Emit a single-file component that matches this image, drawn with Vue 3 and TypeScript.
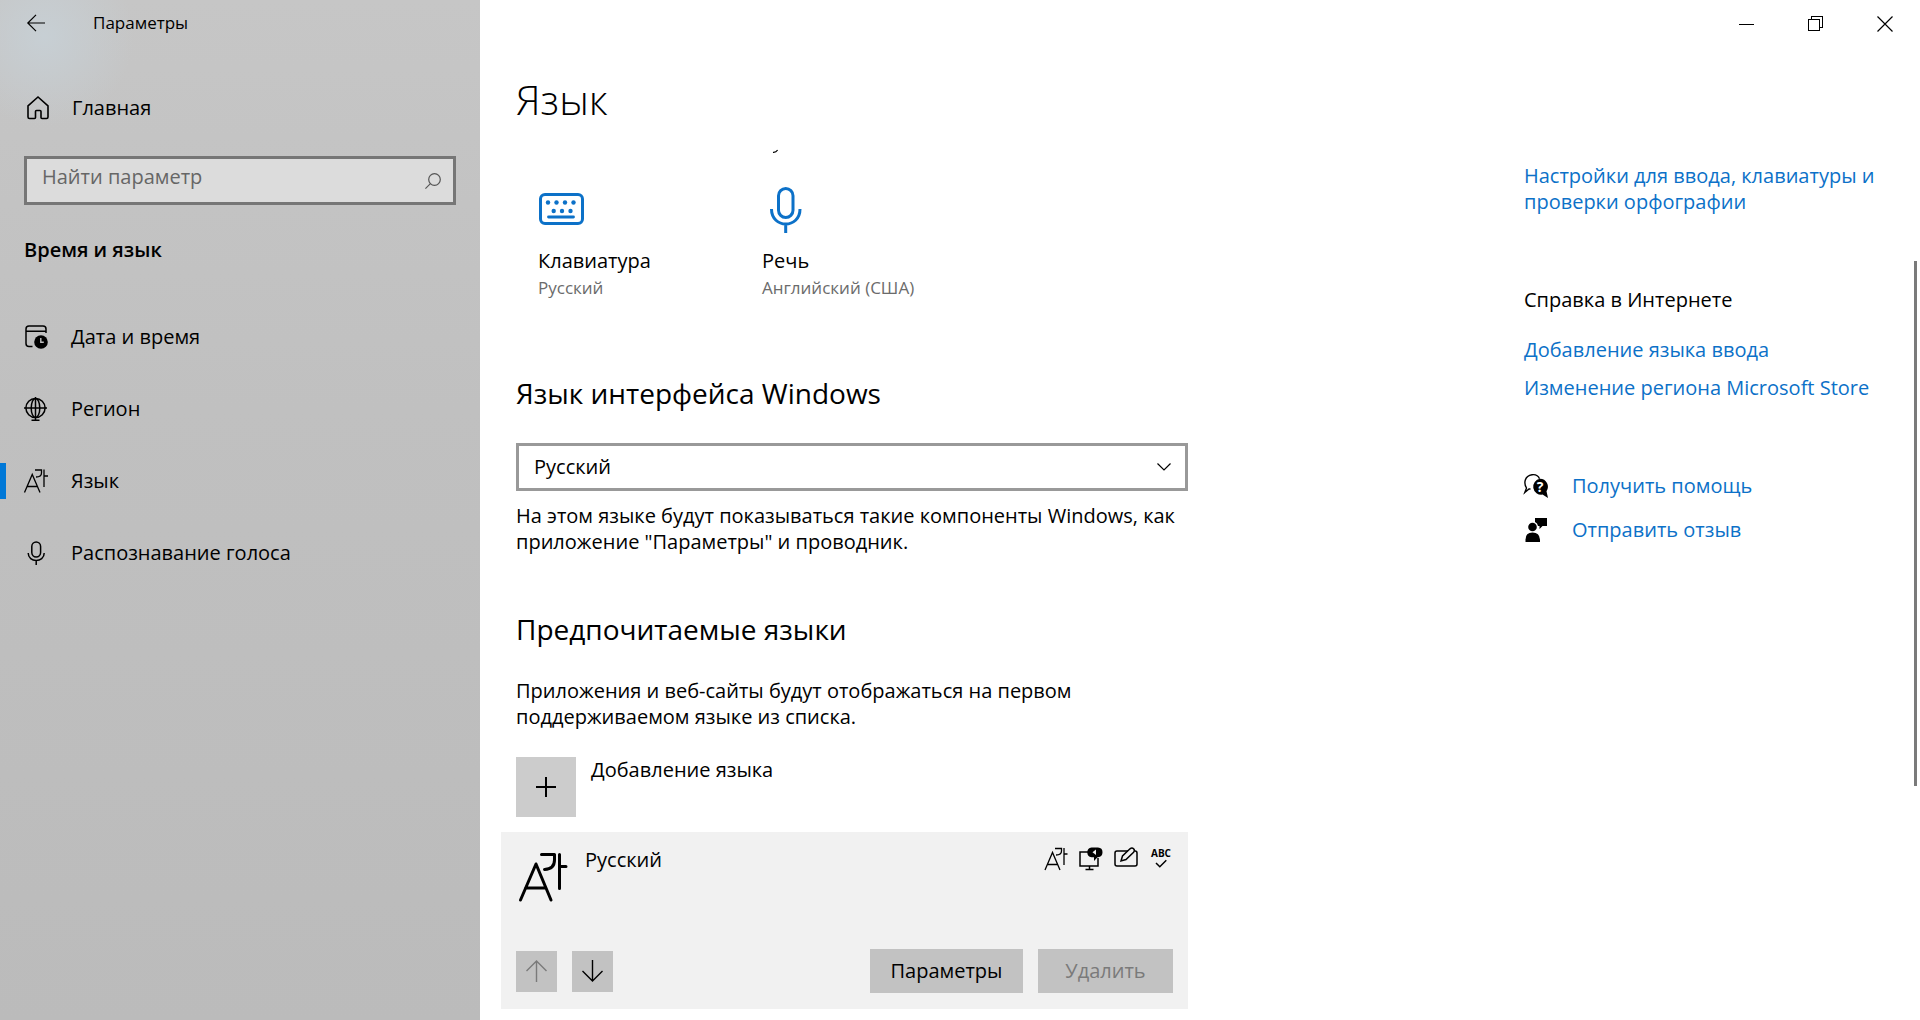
<script setup lang="ts">
import { ref } from 'vue'

type NavIcon = 'date' | 'region' | 'language' | 'mic'

interface NavItem {
  id: NavIcon
  label: string
}

const navItems: NavItem[] = [
  { id: 'date', label: 'Дата и время' },
  { id: 'region', label: 'Регион' },
  { id: 'language', label: 'Язык' },
  { id: 'mic', label: 'Распознавание голоса' },
]

const active = ref<NavIcon>('language')
const query = ref('')
const displayLanguage = ref('Русский')
</script>

<template>
  <div class="window">
    <aside class="sidebar">
      <header class="titlebar">
        <button class="back" type="button" aria-label="Назад">
          <svg width="18" height="18" viewBox="0 0 18 18" class="line">
            <path d="M18 9H1M9 .8.8 9 9 17.2" />
          </svg>
        </button>
        <span class="app-name">Параметры</span>
      </header>

      <a class="home" href="#">
        <svg class="icon line" viewBox="0 0 24 24">
          <path d="M2 9.8 12 1l10 8.800V21q0 1.500-1.500 1.500H16q-1 0-1-1V15.500q0-1-1-1h-3.500q-1 0-1 1v6q0 1-1 1H3.500Q2 22.500 2 21Z" stroke-width="1.600" />
        </svg>
        <span>Главная</span>
      </a>

      <form class="search" @submit.prevent>
        <input v-model="query" type="text" placeholder="Найти параметр" aria-label="Найти параметр" />
        <button type="submit" aria-label="Поиск">
          <svg width="16" height="16" viewBox="0 0 16 16" class="line">
            <circle cx="9.500" cy="6.500" r="5.800" />
            <path d="M5.400 10.600.4 15.600" />
          </svg>
        </button>
      </form>

      <h2 class="section">Время и язык</h2>

      <nav class="nav">
        <a
          v-for="item in navItems"
          :key="item.id"
          href="#"
          :class="{ active: item.id === active }"
          @click.prevent="active = item.id"
        >
          <svg v-if="item.id === 'date'" class="icon line" viewBox="0 0 24 24">
            <path d="M8.500 21.500H5q-3 0-3-3V4q0-3 3-3h14q3 0 3 3v4M2 6.200h20" stroke-width="1.500" />
            <circle cx="17" cy="17" r="6.800" fill="currentColor" stroke="none" />
            <path d="M16.800 13v4.300h3" stroke="#c0c0c0" stroke-width="1.400" />
          </svg>
          <svg v-else-if="item.id === 'region'" class="icon line" viewBox="0 0 24 24">
            <g stroke-width="1.500">
              <circle cx="11.500" cy="11" r="9.600" />
              <ellipse cx="11.500" cy="11" rx="4.300" ry="9.600" />
              <path d="M0 11h23M11.500 0v23M7.500 23.200h8" />
            </g>
          </svg>
          <svg v-else-if="item.id === 'language'" class="icon line" viewBox="0 0 48 48">
            <g stroke-width="2.600">
              <path d="M1 47 16.500 11 32 47M6 35h21M22 2h13v6q0 8-11 8M40 1v35M40 14h8" />
            </g>
          </svg>
          <svg v-else class="icon line" viewBox="0 0 24 24">
            <g stroke-width="1.500">
              <rect x="7.800" y="1" width="8.800" height="15" rx="4.400" />
              <path d="M4.200 12c0 10 16 10 16 0M12.200 19.500V24" />
            </g>
          </svg>
          <span>{{ item.label }}</span>
        </a>
      </nav>
    </aside>

    <div class="main">
      <div class="caption">
        <button type="button" aria-label="Свернуть">
          <svg width="16" height="16" viewBox="0 0 16 16" class="line crisp"><path d="M0 8.500h15" /></svg>
        </button>
        <button type="button" aria-label="Восстановить">
          <svg width="16" height="16" viewBox="0 0 16 16" class="line crisp">
            <path d="M.5 3.500h11v11H.5zM3.500 3.500v-3h11v11h-3" />
          </svg>
        </button>
        <button type="button" aria-label="Закрыть">
          <svg width="16" height="16" viewBox="0 0 16 16" class="line"><path d="M.5.5l15 15M15.500.5l-15 15" /></svg>
        </button>
      </div>

      <h1>Язык</h1>

      <div class="columns">
        <main class="content">
          <div class="scroll-edge">
            <svg width="5" height="3" viewBox="0 0 5 3" class="line"><path d="M0 2.300Q3 2.600 4.600 0" /></svg>
          </div>
          <div class="tiles">
            <a class="tile" href="#">
              <svg width="48" height="48" viewBox="0 0 48 48" class="line">
                <rect x="2.500" y="9.500" width="42" height="29" rx="4.500" stroke-width="3" />
                <path d="M10.500 32h25" stroke-width="2.800" stroke-linecap="round" />
                <g fill="currentColor" stroke="none">
                  <circle cx="10" cy="17.500" r="2.200" /><circle cx="18.500" cy="17.500" r="2.200" />
                  <circle cx="27" cy="17.500" r="2.200" /><circle cx="35.500" cy="17.500" r="2.200" />
                  <circle cx="15.700" cy="26" r="2.200" /><circle cx="24" cy="26" r="2.200" />
                  <circle cx="32.500" cy="26" r="2.200" />
                </g>
              </svg>
              <strong>Клавиатура</strong>
              <small>Русский</small>
            </a>
            <a class="tile" href="#">
              <svg width="48" height="48" viewBox="0 0 48 48" class="line">
                <g stroke-width="3">
                  <rect x="16.500" y="3.500" width="14.500" height="29" rx="7.250" />
                  <path d="M9.500 24c0 20 28.500 20 28.500 0M23.700 39v9" />
                </g>
              </svg>
              <strong>Речь</strong>
              <small>Английский (США)</small>
            </a>
          </div>

          <section class="block">
            <h2><label for="display-language">Язык интерфейса Windows</label></h2>
            <div class="select">
              <select id="display-language" v-model="displayLanguage">
                <option>Русский</option>
              </select>
              <svg width="14" height="8" viewBox="0 0 14 8" class="line"><path d="M.5.5 7 7 13.500.5" /></svg>
            </div>
            <p>На этом языке будут показываться такие компоненты Windows, как приложение "Параметры" и проводник.</p>
          </section>

          <section class="block preferred">
            <h2>Предпочитаемые языки</h2>
            <p>Приложения и веб-сайты будут отображаться на первом поддерживаемом языке из списка.</p>
            <button class="add" type="button">
              <span class="plus">
                <svg width="20" height="20" viewBox="0 0 20 20" class="line crisp"><path d="M0 10h20M10 0v20" /></svg>
              </span>
              <span>Добавление языка</span>
            </button>
          </section>

          <article class="card">
            <div class="card-top">
              <svg width="48" height="48" viewBox="0 0 48 48" class="line">
                <path d="M1.500 47 17 11 32 47M6.500 35h20.500M22.500 1.500h13V7q0 9-10 9.500M40.500 1.500v34M40.500 13.500H47" stroke-width="3" stroke-linecap="round" stroke-linejoin="round" />
              </svg>
              <span class="lang-name">Русский</span>
              <div class="features">
                <svg class="icon line" viewBox="0 0 48 48">
                  <path d="M2 46 17 11 32 46M6 35h21M22 3h13v5q0 8-11 8M40 2v34M40 14h7" stroke-width="2.600" />
                </svg>
                <svg class="icon line" viewBox="0 0 24 24">
                  <path d="M9 5H1v14h18v-8M10.500 19v4M6.500 22.500h8" stroke-width="1.500" />
                  <path d="M12.500.5h6.500Q23.500.8 23.500 5.200T19 10.200h-.5L15 14v-3.800h-2.500Q8.300 9.500 8.300 5.400T12.500.5Z" fill="currentColor" stroke="none" />
                  <path d="m13.500 5.200 3.500-2.800v5.600Z" fill="#f1f1f1" stroke="none" />
                </svg>
                <svg class="icon line" viewBox="0 0 24 24">
                  <g stroke-width="1.500">
                    <path d="M14 4H3Q1 4 1 6v11q0 2 2 2h18q2 0 2-2V6q0-2-2-2" />
                    <path d="m7 14 1.500-5L16 1.800q2-1.600 3.600 0t0 3.400L12 12.500Z" />
                  </g>
                </svg>
                <svg class="icon line" viewBox="0 0 24 24">
                  <text x="12" y="9.500" class="abc">ABC</text>
                  <path d="m7 16 3.800 3.800 6.500-6.500" stroke-width="1.500" />
                </svg>
              </div>
            </div>
            <div class="card-actions">
              <button class="move" type="button" disabled aria-label="Вверх">
                <svg width="22" height="22" viewBox="0 0 22 22" class="line"><path d="M10.500 22V1M.5 11l10-10 10 10" stroke-width="1.400" /></svg>
              </button>
              <button class="move" type="button" aria-label="Вниз">
                <svg width="22" height="22" viewBox="0 0 22 22" class="line"><path d="M10.500 0v21M.5 11l10 10 10-10" stroke-width="1.400" /></svg>
              </button>
              <span class="spacer"></span>
              <button class="options" type="button">Параметры</button>
              <button class="remove" type="button" disabled>Удалить</button>
            </div>
          </article>
        </main>

        <aside class="help">
          <a href="#">Настройки для ввода, клавиатуры и проверки орфографии</a>
          <h3>Справка в Интернете</h3>
          <ul class="links">
            <li><a href="#">Добавление языка ввода</a></li>
            <li><a href="#">Изменение региона Microsoft Store</a></li>
          </ul>
          <ul class="support">
            <li>
              <svg class="icon" viewBox="0 0 24 24">
                <path d="M6.500 15H5L.8 18.500 2.500 14C-.5 9 .5 2 8 .7c4-.5 6.500 1.500 7.500 4" fill="none" stroke="currentColor" stroke-width="1.400" />
                <path d="M16 4.700a8 8 0 0 1 6.500 12.500L24 24l-5.500-3.400A8 8 0 1 1 16 4.700Z" fill="currentColor" />
                <text x="16" y="17.500" class="question">?</text>
              </svg>
              <a href="#">Получить помощь</a>
            </li>
            <li>
              <svg class="icon" viewBox="0 0 24 24" fill="currentColor">
                <path d="M11 0h12v8h-4.500L15.500 11V8H14q-.5-3-3-4Z" />
                <circle cx="8.500" cy="9" r="4.300" />
                <path d="M1.500 24v-2.500q0-7 7-7t7.500 7V24Z" />
              </svg>
              <a href="#">Отправить отзыв</a>
            </li>
          </ul>
        </aside>
      </div>
      <div class="scrollbar"></div>
    </div>
  </div>
</template>

<style>
body {
  margin: 0;
  background: #fff;
}
</style>

<style scoped>
.window {
  display: grid;
  grid-template-columns: 25% 1fr;
  min-height: 100vh;
  font: 20px/26px "Open Sans", "Noto Sans", sans-serif;
  color: #000;
}
h1, h2, h3, p, ul {
  margin: 0;
  padding: 0;
  font-weight: 400;
}
ul {
  list-style: none;
}
a {
  color: inherit;
  text-decoration: none;
}
button, input, select {
  font: inherit;
  color: inherit;
  margin: 0;
  padding: 0;
  border: 0;
  border-radius: 0;
  background: none;
}
svg {
  display: block;
  flex: none;
  overflow: visible;
}
.line {
  fill: none;
  stroke: currentColor;
  stroke-width: 1.2;
}
.crisp {
  shape-rendering: crispEdges;
}
.icon {
  width: 24px;
  height: 24px;
}

.sidebar {
  background:
    radial-gradient(circle at 44px 36px, #c7cfd4 0, #c7cfd400 90px),
    linear-gradient(#c6c6c6, #c0c0c0 40%, #bbb);
}
.titlebar {
  display: flex;
  align-items: center;
  height: 46px;
  padding-left: 27px;
}
.app-name {
  margin-left: 48px;
  font-size: 17px;
}
.home {
  display: flex;
  align-items: center;
  gap: 22px;
  margin-top: 37px;
  padding-left: 26px;
  height: 50px;
}
.search {
  display: flex;
  align-items: center;
  height: 43px;
  margin: 23px 24px 0;
  border: 3px solid #767676;
  background: #dcdcdc;
}
.search input {
  flex: 1;
  min-width: 0;
  height: 35px;
  padding: 0 0 8px 15px;
  outline: 0;
}
.search input::placeholder {
  color: #666;
  opacity: 1;
}
.search button {
  margin-right: 12px;
  color: #555;
}
.section {
  margin: 32px 0 0 24px;
  font-size: 20px;
  font-weight: 600;
}
.nav {
  margin-top: 56px;
}
.nav a {
  display: flex;
  align-items: center;
  gap: 23px;
  height: 36px;
  margin-bottom: 36px;
  padding-left: 18px;
  border-left: 6px solid transparent;
}
.nav a.active {
  border-left-color: #0078d7;
}

.main {
  position: relative;
  min-width: 0;
  padding-left: 36px;
}
.caption {
  display: flex;
  justify-content: flex-end;
  height: 48px;
  padding-right: 1px;
}
.caption button {
  display: grid;
  place-items: center;
  width: 69px;
}
h1 {
  margin-top: 24px;
  font-size: 41px;
  line-height: 54px;
  font-weight: 300;
}
.columns {
  display: flex;
  justify-content: space-between;
  margin-top: 24px;
}
.content {
  width: 672px;
}
.scroll-edge {
  height: 3px;
  padding-left: 257px;
}
.tiles {
  display: flex;
  padding: 32px 0 0 22px;
}
.tile {
  display: flex;
  flex-direction: column;
  width: 224px;
}
.tile svg {
  color: #0c71c8;
}
.tile strong {
  margin-top: 15px;
  font-weight: 400;
}
.tile small {
  font-size: 17px;
  line-height: 28px;
  color: #6b6b6b;
}
.block {
  margin-top: 71px;
}
.block h2 {
  font-size: 28px;
  line-height: 40px;
}
.select {
  position: relative;
  margin: 30px 0 12px;
}
.select select {
  display: block;
  width: 100%;
  height: 48px;
  padding: 0 48px 0 15px;
  border: 3px solid #999;
  appearance: none;
  background: #fff;
}
.select svg {
  position: absolute;
  right: 17px;
  top: 20px;
  pointer-events: none;
}
.preferred {
  margin-top: 54px;
}
.preferred p {
  margin-top: 29px;
}
.add {
  display: flex;
  gap: 15px;
  margin-top: 27px;
}
.plus {
  display: grid;
  place-items: center;
  width: 60px;
  height: 60px;
  background: #ccc;
}
.card {
  margin: 15px 0 12px -15px;
  padding: 15px 15px 16px;
  background: #f1f1f1;
}
.card-top {
  display: flex;
}
.card-top > svg {
  margin: 6px 0 0 3px;
}
.lang-name {
  flex: 1;
  margin-left: 18px;
}
.features {
  display: flex;
  gap: 11px;
}
.abc {
  fill: currentColor;
  stroke: none;
  font-size: 10px;
  font-weight: 700;
  text-anchor: middle;
}
.question {
  fill: #fff;
  font-size: 14px;
  font-weight: 700;
  text-anchor: middle;
}
.card-actions {
  display: flex;
  align-items: center;
  gap: 15px;
  margin-top: 48px;
}
.card-actions button {
  display: grid;
  place-items: center;
  height: 44px;
  background: #c2c2c2;
}
.card-actions .move {
  width: 41px;
  height: 41px;
}
.card-actions button:disabled {
  color: #7a7a7a;
}
.spacer {
  flex: 1;
}
.options {
  width: 153px;
}
.remove {
  width: 135px;
}
.help {
  width: 360px;
  margin: 13px 36px 0 0;
}
.help a {
  color: #0c71c8;
}
.help h3 {
  margin-top: 72px;
  font-size: 20px;
}
.links {
  display: grid;
  gap: 12px;
  margin-top: 24px;
}
.support {
  display: grid;
  gap: 18px;
  margin-top: 72px;
}
.support li {
  display: flex;
  align-items: center;
  gap: 24px;
}
.scrollbar {
  position: absolute;
  top: 261px;
  right: 3px;
  width: 3px;
  height: 525px;
  background: #7a7a7a;
}
</style>
